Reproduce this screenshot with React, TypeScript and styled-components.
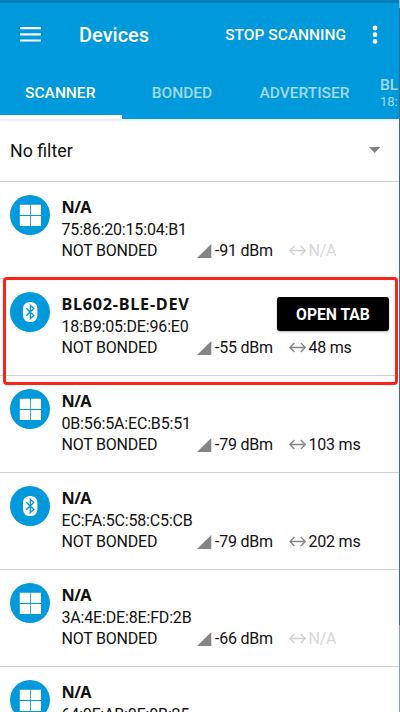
import React from 'react';
import styled, { createGlobalStyle } from 'styled-components';

const BLUE = '#0099dc';

const GlobalStyle = createGlobalStyle`
  * { box-sizing: border-box; }
  body { margin: 0; background: #fff; font-family: Roboto, sans-serif; color: #111; }
  button { font-family: inherit; border: 0; padding: 0; background: none; }
`;

const Frame = styled.div`
  display: flex;
  width: 400px;
  height: 712px;
  overflow: hidden;
  background: #fff;
`;

const Screen = styled.main`
  width: 399px;
  height: 712px;
  overflow: hidden;
`;

const Edge = styled.div`
  width: 1px;
  height: 712px;
  background: linear-gradient(#8db4d0 0 8px, #2f6c98 8px 119px, #426d90 119px 625px, #8a9bc8 625px);
`;

const Header = styled.header`
  height: 119px;
  background: ${BLUE};
  border-top: 3px solid #0081bb;
  box-shadow: 0 1px 3px rgba(0, 0, 0, 0.12);
  display: flex;
  flex-direction: column;
`;

const Toolbar = styled.div`
  display: flex;
  align-items: center;
  height: 63px;
  padding: 0 21px 0 20px;
  color: #fff;
`;

const Title = styled.h1`
  flex: 1;
  margin: 1px 0 0 38px;
  font-size: 20px;
  font-weight: 500;
  line-height: 24px;
`;

const ScanButton = styled.button`
  color: #fff;
  font-size: 15.5px;
  font-weight: 500;
  line-height: 20px;
  white-space: nowrap;
`;

const MoreIcon = styled.svg`
  margin-left: 26px;
`;

const Tabs = styled.nav`
  display: flex;
  height: 53px;
`;

const Tab = styled.button<{ $width: number; $active?: boolean }>`
  flex: 0 0 ${(p) => p.$width}px;
  color: ${(p) => (p.$active ? '#fff' : '#a3daf4')};
  font-size: 15.5px;
  font-weight: 500;
  line-height: 20px;
  padding-top: ${(p) => (p.$active ? 4 : 0)}px;
  padding-right: 1px;
  border-bottom: ${(p) => (p.$active ? '4px solid #fff' : '0')};
`;

const DeviceTab = styled.button`
  flex: 1;
  padding: 0 0 0 13.5px;
  text-align: left;
  color: #a3daf4;
  font-size: 15.5px;
  font-weight: 500;
  line-height: 17px;
  white-space: nowrap;
`;

const TabSub = styled.div`
  font-size: 13px;
  font-weight: 400;
  line-height: 15px;
`;

const Filter = styled.div`
  display: flex;
  align-items: center;
  justify-content: space-between;
  height: 62px;
  padding: 0 18px 0 10px;
  font-size: 17.8px;
`;

const List = styled.ul`
  margin: 0;
  padding: 0;
  list-style: none;
  position: relative;
`;

const Row = styled.li`
  display: flex;
  height: 97px;
  padding: 13px 10px 0 10px;
  border-top: 1px solid #d2d2d2;
`;

const Avatar = styled.svg`
  flex: none;
  width: 40px;
  height: 40px;
`;

const Info = styled.div`
  flex: 1;
  margin-left: 11.5px;
  padding-top: 1.5px;
`;

const Top = styled.div`
  display: flex;
  justify-content: space-between;
  height: 43px;
`;

const Name = styled.div<{ $known: boolean }>`
  font-family: 'Noto Sans', sans-serif;
  font-size: 16.3px;
  font-weight: 700;
  line-height: 20px;
  margin-bottom: 2px;
  letter-spacing: ${(p) => (p.$known ? 0.7 : -0.6)}px;
`;

const Address = styled.div`
  font-size: 16px;
  line-height: 22px;
  letter-spacing: -0.17px;
`;

const OpenButton = styled.button`
  width: 112px;
  height: 34px;
  margin-top: 3.5px;
  border-radius: 3px;
  background: #000;
  color: #fff;
  font-size: 15.7px;
  font-weight: 700;
  box-shadow: 0 1px 2px rgba(0, 0, 0, 0.3);
`;

const Stats = styled.div`
  display: grid;
  grid-template-columns: 135px 18.5px 74px 19.5px 1fr;
  align-items: center;
  height: 22px;
  font-size: 16px;
  line-height: 22px;
  letter-spacing: -0.22px;
  white-space: nowrap;
`;

const Interval = styled.span<{ $muted: boolean }>`
  color: ${(p) => (p.$muted ? '#d8d8d8' : '#111')};
`;

const Highlight = styled.div`
  position: absolute;
  left: 3px;
  top: 96px;
  width: 395px;
  height: 108px;
  border: 3px solid #fd2417;
  border-radius: 4px;
`;

type Kind = 'windows' | 'bluetooth';

function DeviceIcon({ kind }: { kind: Kind }) {
  return (
    <Avatar viewBox="0 0 40 40">
      <circle cx="20" cy="20" r="20" fill={BLUE} />
      {kind === 'windows' ? (
        <path fill="#fff" d="M9.8 9.8H20v10.3H9.8zM20.8 9.8H31v10.3H20.8zM9.8 20.9H20v10.2H9.8zM20.8 20.9H31v10.2H20.8z" />
      ) : (
        <>
          <rect x="13" y="9.9" width="14.4" height="20.2" rx="6.6" fill="#fff" />
          <path d="M16.3 16.2l7.4 7.3-3.4 3.3V13.2l3.4 3.3-7.4 7.3" fill="none" stroke={BLUE} strokeWidth="1.3" />
        </>
      )}
    </Avatar>
  );
}

function Arrow({ muted }: { muted: boolean }) {
  return (
    <svg width="18" height="12" viewBox="0 0 18 12" fill="none" stroke={muted ? '#d0d0d0' : '#858585'} strokeWidth="1.3">
      <path d="M.9 5.5h15.4M5.4 1L.9 5.5 5.4 10M11.8 1l4.5 4.5-4.5 4.5" />
    </svg>
  );
}

interface Device {
  name?: string;
  address: string;
  kind: Kind;
  rssi: number;
  interval?: string;
  open?: boolean;
}

const devices: Device[] = [
  { address: '75:86:20:15:04:B1', kind: 'windows', rssi: -91 },
  { name: 'BL602-BLE-DEV', address: '18:B9:05:DE:96:E0', kind: 'bluetooth', rssi: -55, interval: '48 ms', open: true },
  { address: '0B:56:5A:EC:B5:51', kind: 'windows', rssi: -79, interval: '103 ms' },
  { address: 'EC:FA:5C:58:C5:CB', kind: 'bluetooth', rssi: -79, interval: '202 ms' },
  { address: '3A:4E:DE:8E:FD:2B', kind: 'windows', rssi: -66 },
  { address: '64:0F:AB:0E:0B:25', kind: 'windows', rssi: -70 },
];

function DeviceRow({ device }: { device: Device }) {
  const muted = !device.interval;
  return (
    <Row>
      <DeviceIcon kind={device.kind} />
      <Info>
        <Top>
          <div>
            <Name $known={!!device.name}>{device.name ?? 'N/A'}</Name>
            <Address>{device.address}</Address>
          </div>
          {device.open && <OpenButton>OPEN TAB</OpenButton>}
        </Top>
        <Stats>
          <span>NOT BONDED</span>
          <svg width="15" height="14" viewBox="0 0 15 14">
            <path d="M14.3 0v14H0z" fill="#858585" />
          </svg>
          <span>{device.rssi} dBm</span>
          <Arrow muted={muted} />
          <Interval $muted={muted}>{device.interval ?? 'N/A'}</Interval>
        </Stats>
      </Info>
    </Row>
  );
}

export default function App() {
  return (
    <Frame>
      <GlobalStyle />
      <Screen>
        <Header>
          <Toolbar>
            <svg width="21" height="15" viewBox="0 0 21 15" fill="#fff">
              <path d="M0 0h21v2.2H0zM0 6.2h21v2.2H0zM0 12.4h21v2.2H0z" />
            </svg>
            <Title>Devices</Title>
            <ScanButton>STOP SCANNING</ScanButton>
            <MoreIcon width="6" height="20" viewBox="0 0 6 20" fill="#fff">
              <circle cx="3" cy="3" r="2.4" />
              <circle cx="3" cy="9.7" r="2.4" />
              <circle cx="3" cy="16.4" r="2.4" />
            </MoreIcon>
          </Toolbar>
          <Tabs>
            <Tab $width={121.5} $active>SCANNER</Tab>
            <Tab $width={122}>BONDED</Tab>
            <Tab $width={123}>ADVERTISER</Tab>
            <DeviceTab>
              BL
              <TabSub>18:</TabSub>
            </DeviceTab>
          </Tabs>
        </Header>
        <Filter>
          No filter
          <svg width="12" height="6" viewBox="0 0 12 6">
            <path d="M0 0h11.4L5.7 6z" fill="#808080" />
          </svg>
        </Filter>
        <List>
          {devices.map((device) => (
            <DeviceRow key={device.address} device={device} />
          ))}
          <Highlight />
        </List>
      </Screen>
      <Edge />
    </Frame>
  );
}
